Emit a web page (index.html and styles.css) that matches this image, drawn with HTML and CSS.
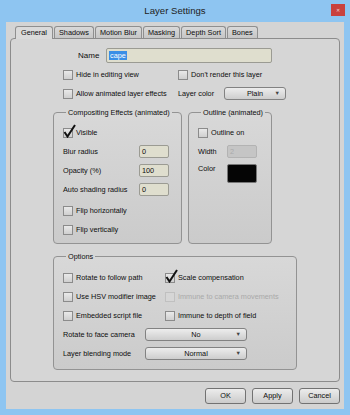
FILE: index.html
```html
<!DOCTYPE html>
<html lang="en">
<head>
    <meta charset="UTF-8">
    <meta name="viewport" content="width=device-width, initial-scale=1.0">
    <title>Layer Settings</title>
    <link rel="stylesheet" href="styles.css">
</head>
<body>
    <div class="window">
        <div class="titlebar">
            <span></span>
            <span class="title">Layer Settings</span>
            <span class="close">&#x2715;</span>
        </div>

        <div class="client">
            <div class="tabs">
                <div class="tab active">General</div>
                <div class="tab">Shadows</div>
                <div class="tab">Motion Blur</div>
                <div class="tab">Masking</div>
                <div class="tab">Depth Sort</div>
                <div class="tab">Bones</div>
            </div>

            <div class="panel">
                <div class="row name-row">
                    <span class="name-label">Name</span>
                    <div class="input name-input"><span class="sel">cape</span></div>
                </div>

                <div class="row top-row">
                    <div class="col1"><span class="cb"></span>Hide in editing view</div>
                    <div class="col2"><span class="cb"></span>Don't render this layer</div>
                </div>

                <div class="row top-row">
                    <div class="col1"><span class="cb"></span>Allow animated layer effects</div>
                    <div class="col2">
                        <span class="color-label">Layer color</span>
                        <div class="dropdown color-dd">Plain<span class="arrow">&#x25BC;</span></div>
                    </div>
                </div>

                <div class="groups">
                    <fieldset class="group comp">
                        <legend>Compositing Effects (animated)</legend>
                        <div class="row"><span class="cb checked"><svg width="13" height="14" viewBox="0 0 13 14"><path d="M1.5 8 L4.5 12.5 L12 1" fill="none" stroke="#111" stroke-width="2"/></svg></span>Visible</div>
                        <div class="row field"><span class="lbl">Blur radius</span><div class="input num">0</div></div>
                        <div class="row field"><span class="lbl">Opacity (%)</span><div class="input num">100</div></div>
                        <div class="row field"><span class="lbl">Auto shading radius</span><div class="input num">0</div></div>
                        <div class="row flip"><span class="cb"></span>Flip horizontally</div>
                        <div class="row"><span class="cb"></span>Flip vertically</div>
                    </fieldset>

                    <fieldset class="group outline">
                        <legend>Outline (animated)</legend>
                        <div class="row"><span class="cb"></span>Outline on</div>
                        <div class="row field"><span class="lbl short">Width</span><div class="input num disabled">2</div></div>
                        <div class="row field color-row"><span class="lbl short">Color</span><div class="swatch"></div></div>
                    </fieldset>
                </div>

                <fieldset class="group options">
                    <legend>Options</legend>
                    <div class="row">
                        <div class="opt1"><span class="cb"></span>Rotate to follow path</div>
                        <div class="opt2"><span class="cb checked"><svg width="13" height="14" viewBox="0 0 13 14"><path d="M1.5 8 L4.5 12.5 L12 1" fill="none" stroke="#111" stroke-width="2"/></svg></span>Scale compensation</div>
                    </div>
                    <div class="row">
                        <div class="opt1"><span class="cb"></span>Use HSV modifier image</div>
                        <div class="opt2 muted"><span class="cb disabled"></span>Immune to camera movements</div>
                    </div>
                    <div class="row">
                        <div class="opt1"><span class="cb"></span>Embedded script file</div>
                        <div class="opt2"><span class="cb"></span>Immune to depth of field</div>
                    </div>
                    <div class="row">
                        <span class="opt-label">Rotate to face camera</span>
                        <div class="dropdown opt-dd">No<span class="arrow">&#x25BC;</span></div>
                    </div>
                    <div class="row">
                        <span class="opt-label">Layer blending mode</span>
                        <div class="dropdown opt-dd">Normal<span class="arrow">&#x25BC;</span></div>
                    </div>
                </fieldset>
            </div>

            <div class="buttons">
                <div class="button">OK</div>
                <div class="button">Apply</div>
                <div class="button">Cancel</div>
            </div>
        </div>
    </div>
</body>
</html>
```

FILE: styles.css
```css
body {
    margin: 0;
    padding: 0;
    font-family: "Liberation Sans", Arial, sans-serif;
    font-size: 7.3px;
    color: #0d0d0d;
}

.window {
    width: 350px;
    height: 415px;
    box-sizing: border-box;
    background-color: #8ec5f1;
    padding: 0 6px 6px;
    display: flex;
    flex-direction: column;
}

.titlebar {
    height: 22px;
    display: grid;
    grid-template-columns: 1fr auto 1fr;
    align-items: center;
}

.title {
    font-size: 9.6px;
    color: #222;
    margin-top: -2px;
}

.close {
    justify-self: end;
    align-self: start;
    margin: 4px -1px 0 0;
    width: 14px;
    height: 12px;
    background-color: #c9413d;
    color: #f4d6d5;
    font-size: 5px;
    text-align: center;
    line-height: 12px;
}

.client {
    flex: 1;
    background-color: #d4d4d4;
    padding: 3px 4px 0;
}

.tabs {
    display: flex;
    margin-left: 5px;
    height: 13px;
    align-items: flex-end;
}

.tab {
    height: 12px;
    box-sizing: border-box;
    padding: 0 4px;
    margin-right: 1px;
    line-height: 11px;
    border: 1px solid #8f8f8f;
    border-bottom: none;
    border-radius: 3px 3px 0 0;
    background: linear-gradient(#d9d9d9, #c6c6c6);
}

.tab.active {
    height: 13px;
    padding: 0 5px;
    margin-bottom: -1px;
    background: #dadada;
    position: relative;
    z-index: 1;
}

.panel {
    height: 344px;
    box-sizing: border-box;
    border: 1px solid #8c8c8c;
    border-radius: 4px;
    background-color: #d6d6d6;
    padding-top: 7px;
}

.row {
    height: 19px;
    display: flex;
    align-items: center;
}

.cb {
    width: 8px;
    height: 8px;
    border: 1px solid #8b8b8b;
    background: linear-gradient(#e9e9e9, #cfcfcf);
    margin-right: 3px;
    flex-shrink: 0;
    display: inline-block;
    position: relative;
}

.cb svg {
    position: absolute;
    left: -1px;
    top: -5px;
}

.cb.disabled {
    border-color: #c0c0c0;
    background: #d6d6d6;
}

.muted {
    color: #a9a9a9;
}

.input {
    height: 13px;
    box-sizing: border-box;
    border: 1px solid #9b9b93;
    border-radius: 2px;
    background-color: #dfdece;
    padding-left: 2px;
    line-height: 11px;
}

.name-row {
    padding-left: 67px;
}

.name-label {
    width: 21px;
    margin-right: 7px;
    font-size: 8px;
}

.name-input {
    width: 166px;
    height: 15px;
    line-height: 13px;
}

.sel {
    background-color: #3a8ee6;
    color: #fff;
    padding: 0 1px;
}

.top-row {
    padding-left: 52px;
}

.col1,
.col2,
.opt1,
.opt2 {
    display: flex;
    align-items: center;
}

.col1 {
    width: 115px;
}

.color-label {
    width: 46px;
}

.dropdown {
    height: 13px;
    box-sizing: border-box;
    border: 1px solid #828282;
    border-radius: 3px;
    background: linear-gradient(#ededed, #cdcdcd);
    text-align: center;
    line-height: 11px;
    position: relative;
}

.arrow {
    position: absolute;
    right: 5px;
    top: 0;
    font-size: 5.5px;
    color: #444;
}

.color-dd {
    width: 62px;
}

.groups {
    display: flex;
    gap: 6px;
    margin: 5px 0 0 42px;
}

.group {
    margin: 0;
    border: 1px solid #939393;
    border-radius: 4px;
    background: linear-gradient(#d8d8d8, #cbcbcb);
    padding: 6px 0 0 9px;
    box-sizing: border-box;
}

.group legend {
    padding: 0 2px;
    margin-left: 3px;
}

.comp {
    width: 129px;
    height: 136px;
}

.outline {
    width: 84px;
    height: 136px;
}

.lbl {
    width: 76px;
}

.lbl.short {
    width: 29px;
}

.num {
    width: 30px;
}

.num.disabled {
    background-color: #c5c5c5;
    border-color: #b3b3b3;
    color: #aaa;
}

.flip {
    margin-top: 2px;
}

.color-row {
    height: 22px;
    align-items: flex-start;
    padding-top: 3px;
    box-sizing: border-box;
}

.swatch {
    width: 30px;
    height: 19px;
    box-sizing: border-box;
    background-color: #050505;
    border: 1px solid #777;
    border-radius: 2px;
}

.options {
    width: 244px;
    height: 118px;
    margin: 8px 0 0 42px;
    padding-top: 7px;
}

.opt1 {
    width: 102px;
}

.opt-label {
    width: 82px;
}

.opt-dd {
    width: 102px;
}

.buttons {
    display: flex;
    justify-content: flex-end;
    gap: 6px;
    margin-top: 6px;
}

.button {
    width: 41px;
    height: 16px;
    box-sizing: border-box;
    border: 1px solid #727272;
    border-radius: 3px;
    background: linear-gradient(#ececec, #cbcbcb);
    text-align: center;
    line-height: 14px;
}
```
